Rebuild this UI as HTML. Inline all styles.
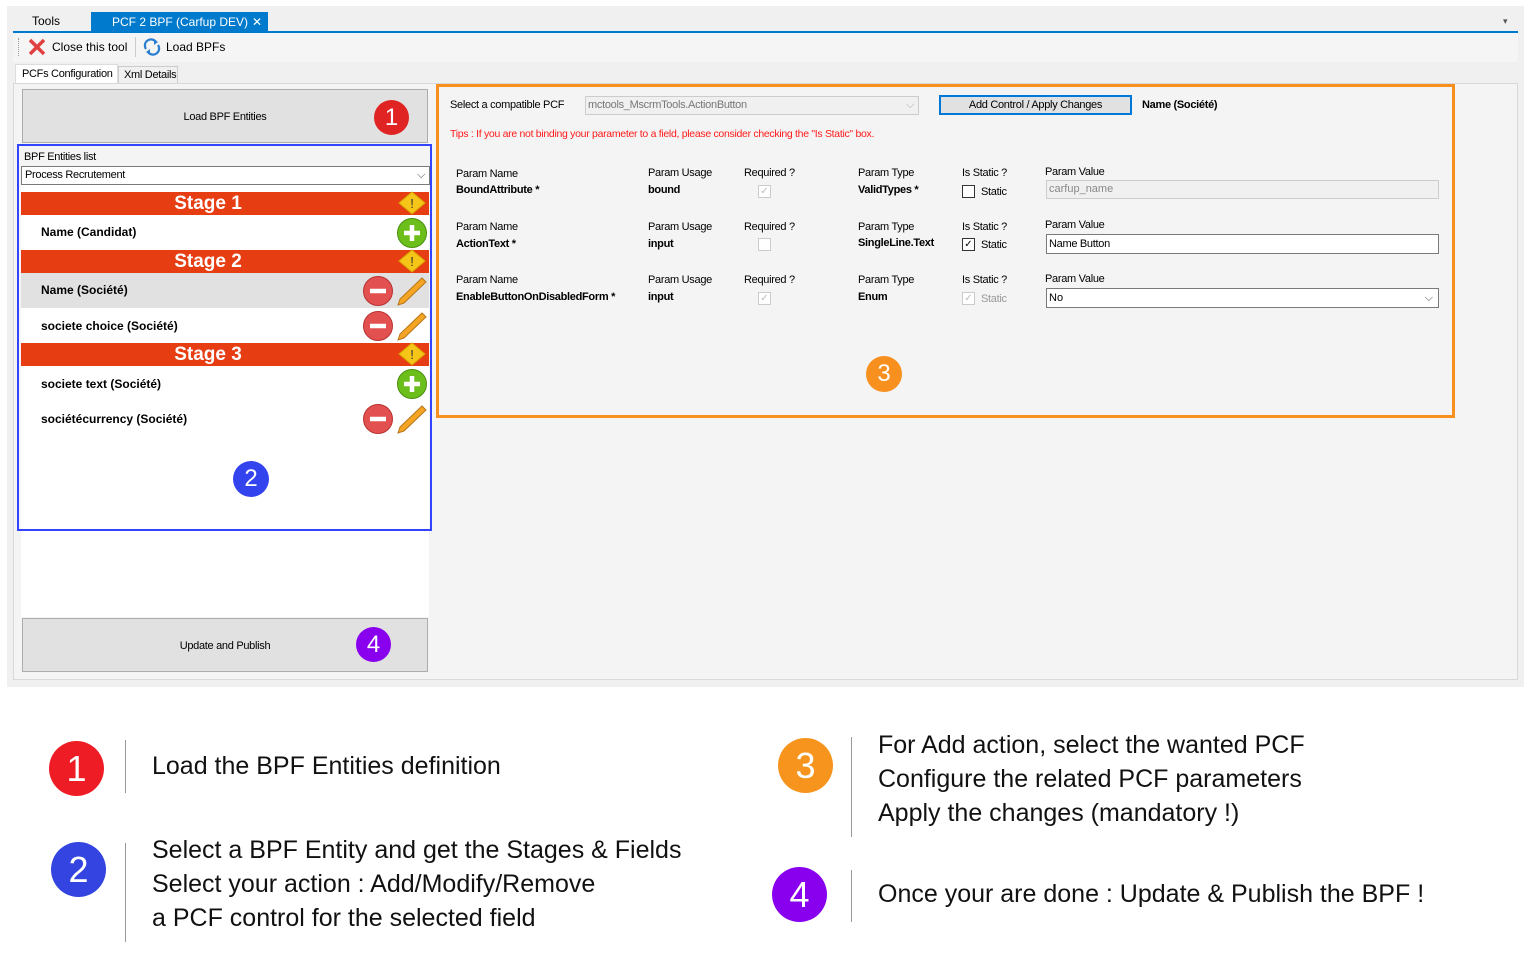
<!DOCTYPE html>
<html><head><meta charset="utf-8"><style>
*{box-sizing:border-box;margin:0;padding:0}
body{width:1530px;height:955px;background:#fff;font-family:"Liberation Sans",sans-serif;position:relative;overflow:hidden;font-size:11px;color:#000}
.a{position:absolute}
.b{font-weight:bold}
.circ{position:absolute;border-radius:50%;color:#fff;text-align:center;font-family:"Liberation Sans",sans-serif}
.stage{position:absolute;left:21px;width:408px;height:23px;background:#e63e12;color:#fff;font-weight:bold;font-size:19px;text-align:center;line-height:23px;padding-right:34px}
.row{position:absolute;left:21px;width:408px;height:35px;font-weight:bold;font-size:12px;line-height:35px;padding-left:20px}
.lbl{position:absolute;font-size:11px;letter-spacing:-0.3px}
.val{position:absolute;font-size:11px;font-weight:bold;letter-spacing:-0.3px}
.cb{position:absolute;width:13px;height:13px;border:1px solid #333;background:#fff}
.cbd{border-color:#ccc}
.leg{position:absolute;font-size:25px;color:#111;line-height:34px}
.vl{position:absolute;width:1px;background:#999}
</style></head><body>
<div class="a" style="left:7px;top:6px;width:1517px;height:681px;background:#f0f0f0"></div>
<div class="a" style="left:14px;top:12px;width:77px;height:19px;background:#f0f0f0;font-size:12px;line-height:19px;padding-left:18px">Tools</div>
<div class="a" style="left:91px;top:12px;width:177px;height:20px;background:#007acc;color:#fff;font-size:12px;line-height:20px;padding-left:21px">PCF 2 BPF (Carfup DEV)<span style="position:absolute;left:161px">✕</span></div>
<div class="a" style="left:13px;top:31px;width:1505px;height:2px;background:#007acc"></div>
<div class="a" style="left:1503px;top:16px;font-size:9px;color:#555">▾</div>
<div class="a" style="left:13px;top:33px;width:1505px;height:29px;background:#f5f5f5"></div>
<div class="a" style="left:18px;top:38px;width:1px;height:18px;border-left:1px dotted #999"></div>
<svg class="a" style="left:28px;top:38px" width="18" height="18"><path d="M2 2L16 16M16 2L2 16" stroke="#e04040" stroke-width="3.5"/></svg>
<div class="a" style="left:52px;top:40px;font-size:12px">Close this tool</div>
<div class="a" style="left:135px;top:37px;width:1px;height:20px;background:#ccc"></div>
<svg class="a" style="left:142px;top:37px" width="20" height="20"><path d="M4 12A6 6 0 0 1 14 5" stroke="#2b7fd0" stroke-width="2.2" fill="none"/><path d="M16 8A6 6 0 0 1 6 15" stroke="#2b7fd0" stroke-width="2.2" fill="none"/><path d="M12 2L16 5L12 8Z M8 12L4 15L8 18Z" fill="#2b7fd0"/></svg>
<div class="a" style="left:166px;top:40px;font-size:12px">Load BPFs</div>
<div class="a" style="left:15px;top:64px;width:103px;height:20px;background:#fff;border:1px solid #ddd;border-bottom:none;font-size:11px;line-height:18px;padding-left:6px;letter-spacing:-0.3px">PCFs Configuration</div>
<div class="a" style="left:118px;top:66px;width:60px;height:18px;background:#f0f0f0;border:1px solid #ccc;border-bottom:none;font-size:11px;line-height:17px;padding-left:5px;letter-spacing:-0.3px">Xml Details</div>
<div class="a" style="left:13px;top:83px;width:1505px;height:597px;background:#f4f4f4;border:1px solid #d8d8d8"></div>
<div class="a" style="left:21px;top:185px;width:408px;height:432px;background:#fff"></div>
<div class="a" style="left:22px;top:89px;width:406px;height:54px;background:#e1e1e1;border:1px solid #adadad;text-align:center;line-height:54px;font-size:11px;letter-spacing:-0.3px">Load BPF Entities</div>
<div class="circ" style="left:374px;top:100px;width:35px;height:35px;background:#e02424;font-size:24px;line-height:35px">1</div>
<div class="a" style="left:17px;top:144px;width:415px;height:387px;border:2px solid #3344ff"></div>
<div class="a" style="left:24px;top:151px;font-size:11px;letter-spacing:-0.3px">BPF Entities list</div>
<div class="a" style="left:21px;top:166px;width:409px;height:19px;background:#fff;border:1px solid #7a7a7a;font-size:11px;line-height:17px;padding-left:3px;letter-spacing:-0.3px">Process Recrutement<span style="position:absolute;right:4px;color:#444">⌵</span></div>
<div class="stage" style="top:192px">Stage 1</div>
<div class="row" style="top:215px;background:#fff">Name (Candidat)</div>
<div class="stage" style="top:250px">Stage 2</div>
<div class="row" style="top:273px;background:#e1e1e1">Name (Société)</div>
<div class="row" style="top:309px;background:#fff">societe choice (Société)</div>
<div class="stage" style="top:343px">Stage 3</div>
<div class="row" style="top:367px;background:#fff">societe text (Société)</div>
<div class="row" style="top:402px;background:#fff">sociétécurrency (Société)</div>
<svg class="a" style="left:398px;top:191px" width="28" height="24"><path d="M14 1L27 12L14 23L1 12Z" fill="#f5c518" stroke="#d9a400"/><text x="14" y="17" font-size="13" text-anchor="middle" fill="#333" font-family="Liberation Sans">!</text></svg>
<svg class="a" style="left:398px;top:249px" width="28" height="24"><path d="M14 1L27 12L14 23L1 12Z" fill="#f5c518" stroke="#d9a400"/><text x="14" y="17" font-size="13" text-anchor="middle" fill="#333" font-family="Liberation Sans">!</text></svg>
<svg class="a" style="left:398px;top:342px" width="28" height="24"><path d="M14 1L27 12L14 23L1 12Z" fill="#f5c518" stroke="#d9a400"/><text x="14" y="17" font-size="13" text-anchor="middle" fill="#333" font-family="Liberation Sans">!</text></svg>
<svg class="a" style="left:396px;top:217px" width="32" height="32"><circle cx="16" cy="16" r="14.5" fill="#6cbf1a" stroke="#4a8f10"/><path d="M16 8V24M8 16H24" stroke="#fff" stroke-width="4.5"/></svg>
<svg class="a" style="left:396px;top:368px" width="32" height="32"><circle cx="16" cy="16" r="14.5" fill="#6cbf1a" stroke="#4a8f10"/><path d="M16 8V24M8 16H24" stroke="#fff" stroke-width="4.5"/></svg>
<svg class="a" style="left:362px;top:275px" width="68" height="32"><circle cx="16" cy="16" r="14.5" fill="#e35050" stroke="#b83030"/><path d="M8 16H24" stroke="#fff" stroke-width="4.5"/><path d="M36 30L38 24L60 3L64 7L42 28Z" fill="#f3a523" stroke="#b8761a"/></svg>
<svg class="a" style="left:362px;top:310px" width="68" height="32"><circle cx="16" cy="16" r="14.5" fill="#e35050" stroke="#b83030"/><path d="M8 16H24" stroke="#fff" stroke-width="4.5"/><path d="M36 30L38 24L60 3L64 7L42 28Z" fill="#f3a523" stroke="#b8761a"/></svg>
<svg class="a" style="left:362px;top:403px" width="68" height="32"><circle cx="16" cy="16" r="14.5" fill="#e35050" stroke="#b83030"/><path d="M8 16H24" stroke="#fff" stroke-width="4.5"/><path d="M36 30L38 24L60 3L64 7L42 28Z" fill="#f3a523" stroke="#b8761a"/></svg>
<div class="circ" style="left:233px;top:461px;width:36px;height:36px;background:#3344ee;font-size:24px;line-height:36px">2</div>
<div class="a" style="left:22px;top:618px;width:406px;height:54px;background:#e1e1e1;border:1px solid #adadad;text-align:center;line-height:54px;font-size:11px;letter-spacing:-0.3px">Update and Publish</div>
<div class="circ" style="left:356px;top:627px;width:35px;height:35px;background:#8800ee;font-size:24px;line-height:35px">4</div>
<div class="a" style="left:436px;top:84px;width:1019px;height:334px;border:3px solid #f7901e"></div>
<div class="lbl" style="left:450px;top:99px">Select a compatible PCF</div>
<div class="a" style="left:585px;top:96px;width:334px;height:19px;background:#f0f0f0;border:1px solid #ccc;font-size:11px;color:#777;line-height:17px;padding-left:2px;letter-spacing:-0.3px">mctools_MscrmTools.ActionButton<span style="position:absolute;right:4px;color:#aaa">⌵</span></div>
<div class="a" style="left:939px;top:95px;width:193px;height:20px;background:#e1e1e1;border:2px solid #0078d7;text-align:center;line-height:16px;font-size:11px;letter-spacing:-0.3px">Add Control / Apply Changes</div>
<div class="val" style="left:1142px;top:99px">Name (Société)</div>
<div class="lbl" style="left:450px;top:128px;color:#ff1a1a;font-size:10.5px">Tips : If you are not binding your parameter to a field, please consider checking the "Is Static" box.</div>
<div class="lbl" style="left:456px;top:168px">Param Name</div><div class="val" style="left:456px;top:184px">BoundAttribute *</div>
<div class="lbl" style="left:648px;top:167px">Param Usage</div><div class="val" style="left:648px;top:184px">bound</div>
<div class="lbl" style="left:744px;top:167px">Required ?</div><div class="cb cbd" style="left:758px;top:185px;color:#bbb;font-size:10px;line-height:11px;text-align:center">✓</div>
<div class="lbl" style="left:858px;top:167px">Param Type</div><div class="val" style="left:858px;top:184px">ValidTypes *</div>
<div class="lbl" style="left:962px;top:167px">Is Static ?</div><div class="cb" style="left:962px;top:185px"></div><div class="lbl" style="left:981px;top:186px">Static</div>
<div class="lbl" style="left:1045px;top:166px">Param Value</div>
<div class="a" style="left:1046px;top:180px;width:393px;height:19px;background:#f0f0f0;border:1px solid #ccc;font-size:11px;color:#888;line-height:17px;padding-left:2px">carfup_name</div>
<div class="lbl" style="left:456px;top:221px">Param Name</div><div class="val" style="left:456px;top:238px">ActionText *</div>
<div class="lbl" style="left:648px;top:221px">Param Usage</div><div class="val" style="left:648px;top:238px">input</div>
<div class="lbl" style="left:744px;top:221px">Required ?</div><div class="cb cbd" style="left:758px;top:238px"></div>
<div class="lbl" style="left:858px;top:221px">Param Type</div><div class="val" style="left:858px;top:237px">SingleLine.Text</div>
<div class="lbl" style="left:962px;top:221px">Is Static ?</div><div class="cb" style="left:962px;top:238px;font-size:10px;line-height:11px;text-align:center">✓</div><div class="lbl" style="left:981px;top:239px">Static</div>
<div class="lbl" style="left:1045px;top:219px">Param Value</div>
<div class="a" style="left:1046px;top:234px;width:393px;height:20px;background:#fff;border:1px solid #7a7a7a;font-size:11px;line-height:18px;padding-left:2px;letter-spacing:-0.3px">Name Button</div>
<div class="lbl" style="left:456px;top:274px">Param Name</div><div class="val" style="left:456px;top:291px">EnableButtonOnDisabledForm *</div>
<div class="lbl" style="left:648px;top:274px">Param Usage</div><div class="val" style="left:648px;top:291px">input</div>
<div class="lbl" style="left:744px;top:274px">Required ?</div><div class="cb cbd" style="left:758px;top:292px;color:#bbb;font-size:10px;line-height:11px;text-align:center">✓</div>
<div class="lbl" style="left:858px;top:274px">Param Type</div><div class="val" style="left:858px;top:291px">Enum</div>
<div class="lbl" style="left:962px;top:274px">Is Static ?</div><div class="cb cbd" style="left:962px;top:292px;color:#bbb;font-size:10px;line-height:11px;text-align:center">✓</div><div class="lbl" style="left:981px;top:293px;color:#999">Static</div>
<div class="lbl" style="left:1045px;top:273px">Param Value</div>
<div class="a" style="left:1046px;top:288px;width:393px;height:20px;background:#fff;border:1px solid #7a7a7a;font-size:11px;line-height:18px;padding-left:2px">No<span style="position:absolute;right:5px;color:#444">⌵</span></div>
<div class="circ" style="left:866px;top:356px;width:36px;height:36px;background:#f7901e;font-size:24px;line-height:36px">3</div>
<div class="circ" style="left:49px;top:741px;width:55px;height:55px;background:#ee1c24;font-size:36px;line-height:55px">1</div>
<div class="vl" style="left:125px;top:740px;height:53px"></div>
<div class="leg" style="left:152px;top:749px">Load the BPF Entities definition</div>
<div class="circ" style="left:51px;top:842px;width:55px;height:55px;background:#3344e0;font-size:36px;line-height:55px">2</div>
<div class="vl" style="left:125px;top:843px;height:99px"></div>
<div class="leg" style="left:152px;top:833px">Select a BPF Entity and get the Stages &amp; Fields<br>Select your action : Add/Modify/Remove<br>a PCF control for the selected field</div>
<div class="circ" style="left:778px;top:738px;width:55px;height:55px;background:#f7941d;font-size:36px;line-height:55px">3</div>
<div class="vl" style="left:851px;top:737px;height:100px"></div>
<div class="leg" style="left:878px;top:728px">For Add action, select the wanted PCF<br>Configure the related PCF parameters<br>Apply the changes (mandatory !)</div>
<div class="circ" style="left:772px;top:867px;width:55px;height:55px;background:#8800ee;font-size:36px;line-height:55px">4</div>
<div class="vl" style="left:851px;top:870px;height:52px"></div>
<div class="leg" style="left:878px;top:877px">Once your are done : Update &amp; Publish the BPF !</div>
</body></html>
